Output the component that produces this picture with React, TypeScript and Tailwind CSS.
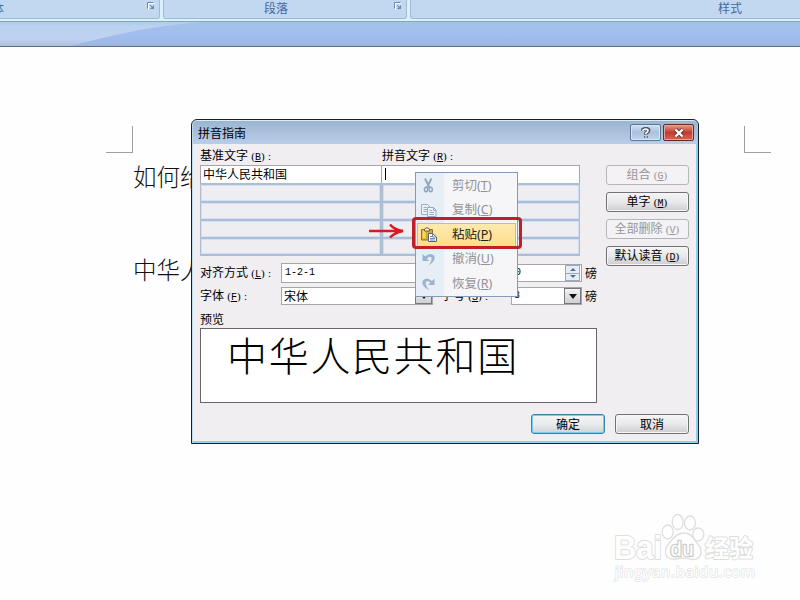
import React from 'react';

const rubyRows = [0, 1, 2, 3];

const Mnemonic = ({ text, letter, colon = false }: { text: string; letter: string; colon?: boolean }) => (
    <span className="inline-flex items-baseline whitespace-nowrap">
        {text}
        <span className="inline-flex w-[18px] items-baseline justify-center pl-[2px] font-['Liberation_Serif'] text-[11px]">
            (<span className="font-['Liberation_Mono'] text-[10px] underline underline-offset-1">{letter}</span>)
        </span>
        {colon && <span className="pl-[2px] font-['Liberation_Serif'] text-[11px]">:</span>}
    </span>
);

const LauncherIcon = () => (
    <svg width="8" height="8" viewBox="0 0 8 8" fill="none">
        <path d="M1.5 7.5v-6h6" stroke="#fff" />
        <path d="M.5 6.5v-6h6" stroke="#6688ad" />
        <path d="M3 3l3 3" stroke="#6688ad" />
        <path d="M7 3v4H3z" fill="#6688ad" />
    </svg>
);

const RibbonGroup = ({ label, className, launcher = true }: { label: string; className: string; launcher?: boolean }) => (
    <div className={`relative h-[19px] shrink-0 rounded-b-[3px] border border-t-0 border-[#9dbcd0] bg-[#c2d8f0] text-xs leading-[16px] text-[#45689f] ${className}`}>
        {label}
        {launcher && (
            <span className="absolute top-[2px] right-[4px]">
                <LauncherIcon />
            </span>
        )}
    </div>
);

const Ribbon = () => (
    <header>
        <div className="flex h-[21px] gap-[3px] overflow-hidden bg-[#daf0fa]">
            <RibbonGroup label="体" className="-ml-[8px] w-[168px] border-l-0" />
            <RibbonGroup label="段落" className="w-[244px] pl-[100px]" />
            <RibbonGroup label="样式" className="w-[420px] pl-[307px]" launcher={false} />
        </div>
        <div className="h-[26px] border-t border-b border-t-[#86a6bb] border-b-[#5f6a85] bg-gradient-to-b from-[#a2c2e6] via-[#a2bdef] via-55% to-[#9bb7df]">
            <svg width="200" height="24" viewBox="0 0 200 24">
                <defs>
                    <linearGradient id="wedge" x1="0" x2="0" y1="0" y2="1">
                        <stop offset="0" stopColor="#b0cbea" />
                        <stop offset=".2" stopColor="#bcd2f0" />
                        <stop offset=".7" stopColor="#bed1f2" />
                        <stop offset="1" stopColor="#aec3dd" />
                    </linearGradient>
                </defs>
                <path d="M0 0H200Q155 4 120 12T71 24H0z" fill="url(#wedge)" />
            </svg>
        </div>
    </header>
);

const DocumentPage = () => (
    <main className="pt-[79px] font-light text-[#111]">
        <div className="flex justify-between pr-[29px] pl-[106px]">
            <div className="h-[27px] w-[27px] border-r border-b border-[#a0a0a0]" />
            <div className="h-[27px] w-[27px] border-b border-l border-[#a0a0a0]" />
        </div>
        <p className="mt-[5px] pl-[133px] text-[23.5px] leading-[36px]">如何给</p>
        <p className="mt-[57px] pl-[133px] text-[23.5px] leading-[36px]">中华人</p>
    </main>
);

const TitleBar = () => (
    <div className="flex h-[23px] items-center rounded-t-[4px] bg-gradient-to-b from-[#9bb5d0] to-[#b9cde8] pr-[3px] pl-[5px]">
        <span className="flex-1 text-xs leading-[20px] text-black">拼音指南</span>
        <button className="flex h-[17px] w-[31px] items-center justify-center rounded-[2px] border border-[#5c7594] bg-gradient-to-b from-[#cfdff1] via-[#a9c1de] via-50% to-[#c0d5ed] shadow-[inset_0_0_0_1px_#d7e5f4]">
            <svg width="10" height="12" viewBox="0 0 10 12" fill="none">
                <path d="M2 4V2.500Q5 .5 7.500 2.500Q8 4.500 5 6V8M5 9v2" stroke="#4b566a" strokeWidth="3.500" />
                <path d="M2 4V3Q5 1 7 3Q7.500 4.500 5 6V7.500M5 9.200v1.600" stroke="#fff" strokeWidth="1.500" />
            </svg>
        </button>
        <button className="ml-[2px] flex h-[17px] w-[31px] items-center justify-center rounded-[2px] border border-[#6e2622] bg-gradient-to-b from-[#e29a8f] via-[#c23a2d] via-50% to-[#d4665a] shadow-[inset_0_0_0_1px_#e3a49b]">
            <svg width="12" height="10" viewBox="0 0 12 10" fill="none">
                <path d="M2.500 1.500l7 7M9.500 1.500l-7 7" stroke="#5e3a40" strokeWidth="4" />
                <path d="M2.500 1.500l7 7M9.500 1.500l-7 7" stroke="#fff" strokeWidth="2.300" />
            </svg>
        </button>
    </div>
);

const RubyTable = () => (
    <div className="w-[380px]">
        <div className="flex h-[18px] border border-b-0 border-[#a5a5ab] bg-white text-xs leading-[16px]">
            <div className="w-[181px] border-r border-[#a5a5ab] pl-[2px]">中华人民共和国</div>
            <div className="pt-[2px] pl-[3px]">
                <div className="h-[12px] w-px bg-black" />
            </div>
        </div>
        {rubyRows.map(row => (
            <div key={row} className="flex h-[18px] border-x border-t-2 border-[#adbdd3] last:h-[19px] last:border-b-2">
                <div className="w-[182px] border-r-[3px] border-[#adbdd3] bg-[#eeeef2] shadow-[inset_0_0_0_1px_#d0e0f4]" />
                <div className="flex-1 bg-[#eeeef2] shadow-[inset_0_0_0_1px_#d0e0f4]" />
            </div>
        ))}
    </div>
);

const DropButton = () => (
    <span className="flex h-full w-[17px] items-center justify-center border border-[#77777d] bg-gradient-to-b from-[#f3f3f4] to-[#cfcfd3]">
        <svg width="8" height="5" viewBox="0 0 8 5">
            <path d="M0 0h8L4 5z" fill="#111" />
        </svg>
    </span>
);

const Spinner = () => (
    <span className="mr-px flex h-[16px] w-[15px] flex-col border border-[#9ba8b5] bg-[#e8edf3]">
        <span className="flex flex-1 items-center justify-center border-b border-[#9ba8b5]">
            <svg width="6" height="3" viewBox="0 0 6 3">
                <path d="M0 3h6L3 0z" fill="#4e729d" />
            </svg>
        </span>
        <span className="flex flex-1 items-center justify-center">
            <svg width="6" height="3" viewBox="0 0 6 3">
                <path d="M0 0h6L3 3z" fill="#4e729d" />
            </svg>
        </span>
    </span>
);

const SideButton = ({ text, letter, disabled = false }: { text: string; letter: string; disabled?: boolean }) => (
    <button
        disabled={disabled}
        className={`flex h-[20px] w-[83px] items-center justify-center rounded-[3px] border text-xs ${
            disabled
                ? 'border-[#b5b5ba] bg-[#f3f2f4] text-[#96969a]'
                : 'border-[#717176] bg-gradient-to-b from-[#f4f4f5] via-[#e9e9eb] via-50% to-[#cdcdd1] text-black shadow-[inset_0_0_0_1px_#f6f6f8]'
        }`}
    >
        <Mnemonic text={text} letter={letter} />
    </button>
);

const PhoneticDialog = () => (
    <section className="absolute top-[119px] left-[191px] h-[325px] w-[508px] rounded-t-[6px] border border-[#14212f] bg-[#f0eef1] text-xs text-black shadow-[inset_1px_0_0_#bfdbe9,inset_-2px_-2px_0_#8fd0e6,inset_0_1px_0_#dcecf6]">
        <div className="p-px">
            <TitleBar />
        </div>
        <div className="flex pt-[3px] pl-[8px]">
            <div className="w-[406px]">
                <div className="flex h-[17px] items-center pb-px leading-[14px]">
                    <div className="w-[182px]">
                        <Mnemonic text="基准文字" letter="B" colon />
                    </div>
                    <Mnemonic text="拼音文字" letter="R" colon />
                </div>
                <RubyTable />
            </div>
            <div className="flex flex-col gap-[7px] pt-[17px]">
                <SideButton text="组合" letter="G" disabled />
                <SideButton text="单字" letter="M" />
                <SideButton text="全部删除" letter="V" disabled />
                <SideButton text="默认读音" letter="D" />
            </div>
        </div>
        <div className="-mt-[3px] pl-[8px]">
            <div className="flex h-[20px] items-center">
                <span className="w-[81px]"><Mnemonic text="对齐方式" letter="L" colon /></span>
                <span className="flex h-[20px] w-[152px] items-center border border-[#a5a5ab] bg-white pl-[3px] font-['Liberation_Mono'] text-[10px]">1-2-1</span>
                <span className="ml-[78px] flex h-[18px] w-[71px] items-center justify-between border border-[#a5a5ab] bg-white pl-[3px] font-['Liberation_Mono'] text-[10px]">
                    0<Spinner />
                </span>
                <span className="pl-[3px]">磅</span>
            </div>
            <div className="mt-[4px] flex h-[18px] items-center">
                <span className="w-[81px]"><Mnemonic text="字体" letter="F" colon /></span>
                <span className="flex h-[18px] w-[152px] items-center justify-between border border-[#a5a5ab] bg-white pl-[2px]">
                    宋体<DropButton />
                </span>
                <span className="w-[78px] pl-[8px]"><Mnemonic text="字号" letter="S" colon /></span>
                <span className="flex h-[18px] w-[71px] items-center justify-between border border-[#a5a5ab] bg-white pl-[2px] font-['Liberation_Mono'] text-[10px]">
                    8<DropButton />
                </span>
                <span className="pl-[3px]">磅</span>
            </div>
            <div className="mt-[7px] h-[16px] leading-[14px]">预览</div>
            <div className="h-[75px] w-[397px] border border-[#66666b] bg-white pl-[26px] text-[40px] leading-[50px] font-light tracking-[1.7px]">中华人民共和国</div>
            <div className="mt-[11px] flex justify-end gap-[10px] pr-[9px]">
                <button className="h-[20px] w-[74px] rounded-[3px] border border-[#3b83a5] bg-gradient-to-b from-[#f4f5f6] via-[#e9ebed] via-50% to-[#cfd4d9] leading-[18px] shadow-[inset_0_0_0_1px_#78cdec]">确定</button>
                <button className="h-[20px] w-[74px] rounded-[3px] border border-[#717176] bg-gradient-to-b from-[#f4f4f5] via-[#e9e9eb] via-50% to-[#cdcdd1] leading-[18px] shadow-[inset_0_0_0_1px_#f6f6f8]">取消</button>
            </div>
        </div>
    </section>
);

const CutIcon = () => (
    <svg width="16" height="16" viewBox="0 0 16 16" fill="none" stroke="#8fa5c3">
        <path d="M4 .5l4.500 9M10.500 .5L6 9.500" strokeWidth="1.900" />
        <ellipse cx="5" cy="11.500" rx="1.600" ry="2.200" strokeWidth="1.500" />
        <ellipse cx="9.700" cy="11.500" rx="1.600" ry="2.200" strokeWidth="1.500" />
    </svg>
);

const CopyIcon = () => (
    <svg width="16" height="16" viewBox="0 0 16 16" fill="#eef3fa" stroke="#94abcc">
        <path d="M.5 1.500h6l2.500 2.500v7.500H.5zM2.500 4.500h3M2.500 6.500h4M2.500 8.500h3" />
        <path d="M6.500 4.500h6l2.500 2.500v6.500H6.500zM12.500 4.500V7.500H15M8.500 7.500h2.500M8.500 9.500h4.500M8.500 11.500h4.500" />
    </svg>
);

const PasteIcon = () => (
    <svg width="16" height="16" viewBox="0 0 16 16">
        <path d="M.5 2.500h11V13H.5z" fill="#dba72c" stroke="#927022" />
        <path d="M1.500 3.500h3v8H1.500z" fill="#f8d763" />
        <path d="M3.500 4V2L5 1h2l1.500 1v2z" fill="#f4f4f4" stroke="#705e3e" />
        <path d="M7.500 6.500h4l4 3.500v4.500h-8z" fill="#fff" stroke="#52627b" />
        <path d="M9 9.500h2M9 11.500h5M9 13h5M11.500 6.500v3.500H15" fill="none" stroke="#6d87a8" />
    </svg>
);

const UndoIcon = () => (
    <svg width="16" height="16" viewBox="0 0 16 16">
        <path d="M1.500 2v7h7L5.800 7Q8 4 10 5Q12 7.500 7.500 13.500Q14.500 9.500 13.500 4.300Q10 -.5 4.200 4.500z" fill="#9db2d0" />
    </svg>
);

const RedoIcon = () => (
    <svg width="16" height="16" viewBox="0 0 16 16">
        <path d="M13.500 2.500v6.500h-6.500l2.500-2.500Q7 4.500 5 5.500Q3.500 8 8 14Q.5 10.500 1.500 5Q5 0 11 5z" fill="#9db2d0" />
    </svg>
);

const menuItems = [
    { label: '剪切', letter: 'T', icon: <CutIcon /> },
    { label: '复制', letter: 'C', icon: <CopyIcon /> },
    { label: '粘贴', letter: 'P', icon: <PasteIcon />, active: true },
    { label: '撤消', letter: 'U', icon: <UndoIcon /> },
    { label: '恢复', letter: 'R', icon: <RedoIcon /> },
];

const ContextMenu = () => (
    <ul className="absolute top-[172px] left-[415px] h-[125px] w-[103px] border border-[#7f9dba] bg-gradient-to-r from-[#e7eef5] from-[28px] to-[#f6f6f9] to-[28px] px-px pt-px">
        {menuItems.map(item => (
            <li
                key={item.label}
                className={`flex h-[24.5px] items-center border pl-[3px] text-[12.5px] ${
                    item.active ? 'border-[#e2b95d] bg-gradient-to-b from-[#fdeab0] to-[#fddd88] text-[#222]' : 'border-transparent text-[#929296]'
                }`}
            >
                {item.icon}
                <span className="pl-[15px] font-['Noto_Sans','Noto_Sans_CJK_SC',sans-serif] whitespace-nowrap">
                    {item.label}(<span className="underline">{item.letter}</span>)
                </span>
            </li>
        ))}
    </ul>
);

const PasteMarker = () => (
    <>
        <div className="absolute top-[217px] left-[412px] h-[32px] w-[110px] rounded-[4px] border-[3px] border-[#c01f27]" />
        <svg className="absolute top-[222px] left-[368px]" width="38" height="18" viewBox="0 0 38 18" fill="none">
            <path d="M1 9h32M22 2.500Q26 7.500 35 9Q26 11 22 15.500" stroke="#dc1820" strokeWidth="2.500" />
        </svg>
    </>
);

const Watermark = () => (
    <svg className="absolute top-[505px] left-[605px]" width="165" height="80" viewBox="0 0 165 80" fill="#fff" stroke="#dedede" strokeWidth="2" strokeLinejoin="round">
        <text x="9" y="53.500" fontFamily="Liberation Sans, sans-serif" fontWeight="700" fontSize="33" textLength="48" lengthAdjust="spacingAndGlyphs" paintOrder="stroke">Bai</text>
        <g strokeWidth="1.300">
            <ellipse cx="62.700" cy="27" rx="5.500" ry="7" />
            <ellipse cx="72.700" cy="17" rx="5.500" ry="7.500" />
            <ellipse cx="85" cy="18" rx="5.500" ry="7" />
            <ellipse cx="93.300" cy="29.500" rx="5.500" ry="6.500" />
            <path d="M79 28C73 28 69 32 66 36C62 40 60 43 60.500 48C61 53 65 54.500 71 54Q79 52 86 54.500C93 55 97 51 96 45C95 40 91 38 89 34C86 29.500 83 28 79 28z" />
        </g>
        <text x="65.500" y="50.500" fontFamily="Liberation Sans, sans-serif" fontSize="20" textLength="23" stroke="#cbcbcb" strokeWidth="2.600" paintOrder="stroke">du</text>
        <text x="100" y="52" fontFamily="Noto Sans CJK SC, sans-serif" fontWeight="700" fontSize="24" paintOrder="stroke">经验</text>
        <text x="10" y="72" fontFamily="Noto Sans, sans-serif" fontSize="15" stroke="#e4e4e4" strokeWidth="1.500" textLength="140" paintOrder="stroke">jingyan.baidu.com</text>
    </svg>
);

function App() {
    return (
        <div className="relative h-[600px] w-[800px] overflow-hidden bg-[#fefefe] font-['Noto_Sans_CJK_SC',sans-serif]">
            <Ribbon />
            <DocumentPage />
            <PhoneticDialog />
            <ContextMenu />
            <PasteMarker />
            <Watermark />
        </div>
    );
}

export default App;
